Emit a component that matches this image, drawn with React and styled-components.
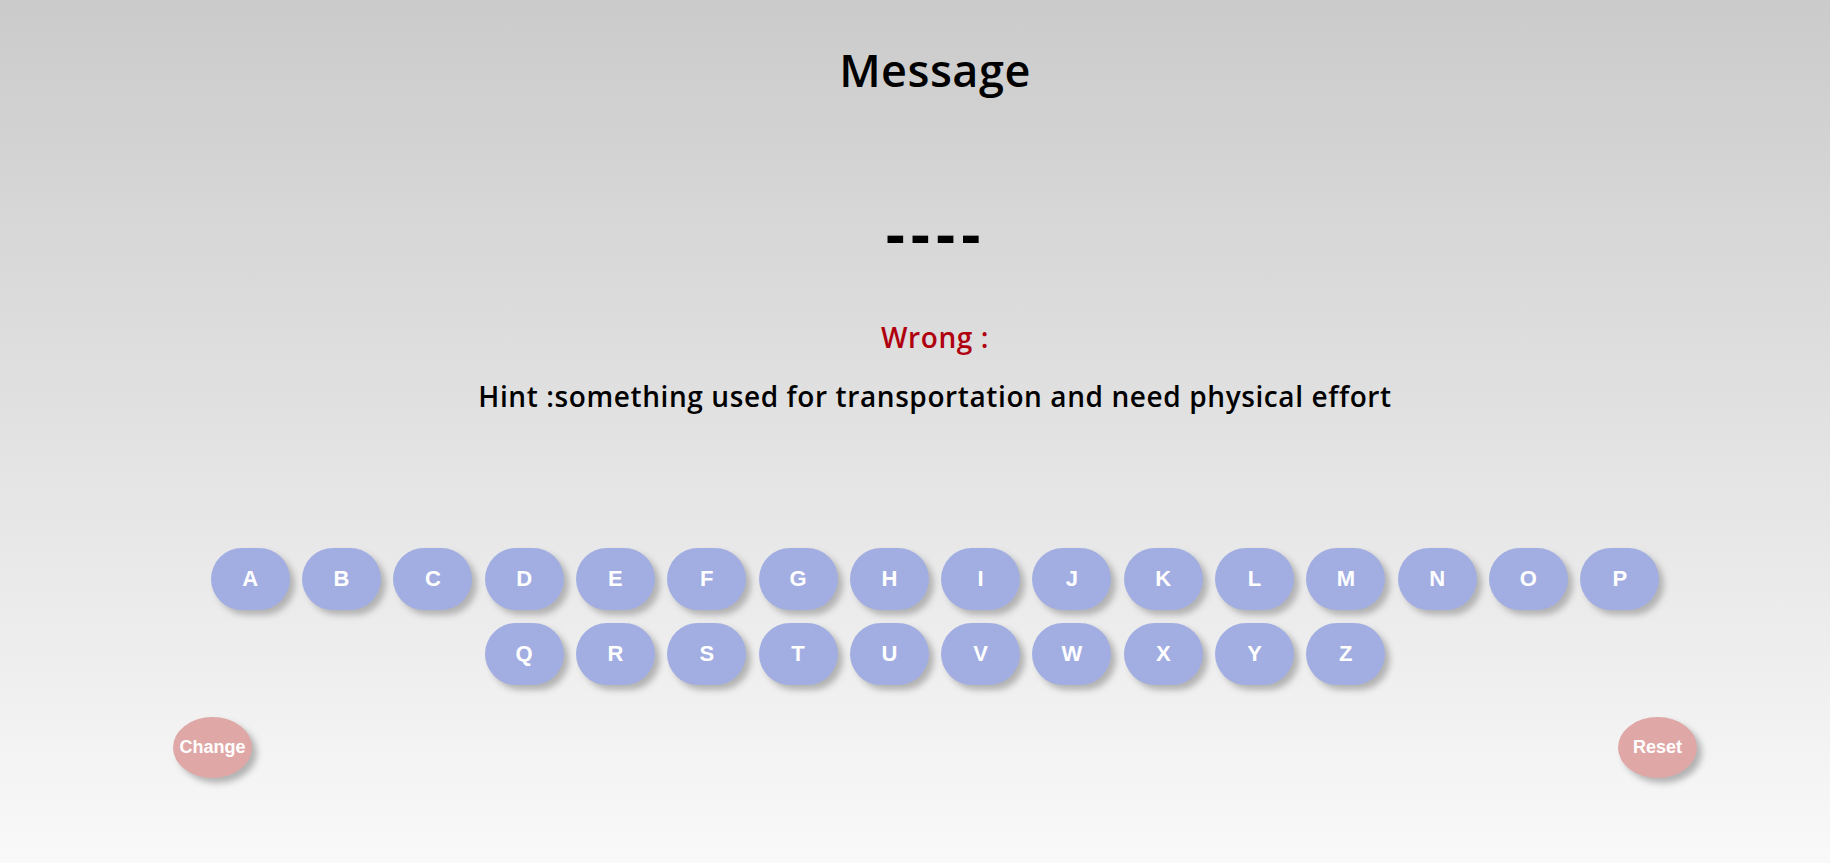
import React from "react";
import styled, { createGlobalStyle } from "styled-components";

const GlobalStyle = createGlobalStyle`
  html, body {
    margin: 0;
    padding: 0;
  }
  body {
    min-height: 100vh;
    background: linear-gradient(to bottom, #cbcbcb, #f9f9f9);
    font-family: "Open Sans", "Liberation Sans", sans-serif;
  }
`;

const LETTERS = "ABCDEFGHIJKLMNOPQRSTUVWXYZ".split("");

export default function App() {
  return (
    <>
      <GlobalStyle />
      <Page>
        <Title>Message</Title>
        <Word>----</Word>
        <Wrong>Wrong :</Wrong>
        <Hint>Hint :something used for transportation and need physical effort</Hint>
        <Keyboard>
          {LETTERS.map((l) => (
            <Key key={l}>{l}</Key>
          ))}
        </Keyboard>
        <Controls>
          <Action>Change</Action>
          <Action>Reset</Action>
        </Controls>
      </Page>
    </>
  );
}

const Page = styled.div`
  height: 863px;
  padding-left: 40px;
  box-sizing: border-box;
  display: flex;
  flex-direction: column;
  align-items: center;
  overflow: hidden;
`;

const Title = styled.h1`
  margin: 44px 0 0;
  font-size: 45px;
  line-height: 52px;
  font-weight: 600;
  letter-spacing: 0.5px;
  color: #000;
`;

const Word = styled.div`
  margin-top: 111px;
  font-family: "DejaVu Sans", sans-serif;
  font-weight: 700;
  font-size: 51px;
  line-height: 60px;
  letter-spacing: 4px;
  color: #000;
`;

const Wrong = styled.h2`
  margin: 53px 0 0;
  font-size: 28px;
  line-height: 34px;
  font-weight: 600;
  letter-spacing: 0.6px;
  color: #b0000f;
`;

const Hint = styled.h2`
  margin: 25px 0 0;
  font-size: 28px;
  line-height: 34px;
  font-weight: 600;
  letter-spacing: 0.6px;
  color: #000;
`;

const Keyboard = styled.div`
  margin-top: 135px;
  width: 1462px;
  display: flex;
  flex-wrap: wrap;
  justify-content: center;
  gap: 13px 12.3px;
`;

const Key = styled.button`
  width: 79px;
  height: 62px;
  border: none;
  border-radius: 31px;
  background: #a2aee2;
  color: #fff;
  font-family: "Liberation Sans", Arial, sans-serif;
  font-weight: 700;
  font-size: 22px;
  box-shadow: 5px 5px 6px #b3b3b3;
  cursor: pointer;
`;

const Controls = styled.div`
  align-self: stretch;
  margin-top: 32px;
  padding: 0 133px;
  display: flex;
  justify-content: space-between;
`;

const Action = styled.button`
  width: 79px;
  height: 61px;
  padding: 0;
  border: none;
  border-radius: 50%;
  background: #dfa8a7;
  color: #fff;
  font-family: "Liberation Sans", Arial, sans-serif;
  font-weight: 700;
  font-size: 18px;
  box-shadow: 5px 5px 6px #b3b3b3;
  cursor: pointer;
`;
